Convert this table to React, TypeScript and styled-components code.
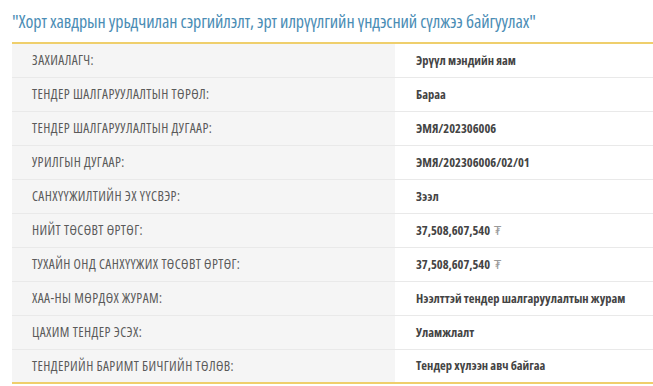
import React from "react";
import styled, { createGlobalStyle } from "styled-components";

const GlobalStyle = createGlobalStyle`
  html, body {
    margin: 0;
    padding: 0;
    background: #ffffff;
  }
  body {
    font-family: "Open Sans", "DejaVu Sans", sans-serif;
    font-stretch: 75%;
  }
`;

const rows = [
  { label: "ЗАХИАЛАГЧ:", value: "Эрүүл мэндийн яам" },
  { label: "ТЕНДЕР ШАЛГАРУУЛАЛТЫН ТӨРӨЛ:", value: "Бараа" },
  { label: "ТЕНДЕР ШАЛГАРУУЛАЛТЫН ДУГААР:", value: "ЭМЯ/202306006" },
  { label: "УРИЛГЫН ДУГААР:", value: "ЭМЯ/202306006/02/01" },
  { label: "САНХҮҮЖИЛТИЙН ЭХ ҮҮСВЭР:", value: "Зээл" },
  { label: "НИЙТ ТӨСӨВТ ӨРТӨГ:", value: "37,508,607,540", money: true },
  { label: "ТУХАЙН ОНД САНХҮҮЖИХ ТӨСӨВТ ӨРТӨГ:", value: "37,508,607,540", money: true },
  { label: "ХАА-НЫ МӨРДӨХ ЖУРАМ:", value: "Нээлттэй тендер шалгаруулалтын журам" },
  { label: "ЦАХИМ ТЕНДЕР ЭСЭХ:", value: "Уламжлалт" },
  { label: "ТЕНДЕРИЙН БАРИМТ БИЧГИЙН ТӨЛӨВ:", value: "Тендер хүлээн авч байгаа" },
];

export default function App() {
  return (
    <>
      <GlobalStyle />
      <Page>
        <Title>"Хорт хавдрын урьдчилан сэргийлэлт, эрт илрүүлгийн үндэсний сүлжээ байгуулах"</Title>
        <Table>
          <tbody>
            {rows.map((row) => (
              <Row key={row.label}>
                <Label>{row.label}</Label>
                <Value>
                  {row.value}
                  {row.money && <Currency>₮</Currency>}
                </Value>
              </Row>
            ))}
          </tbody>
        </Table>
      </Page>
    </>
  );
}

const Page = styled.div`
  padding: 10px 0 0 12px;
`;

const Title = styled.h2`
  margin: 0 0 9px;
  font-size: 18px;
  font-weight: 400;
  letter-spacing: -0.1px;
  line-height: 23px;
  color: #4b8db5;
  white-space: nowrap;
`;

const Table = styled.table`
  width: 100%;
  border-collapse: collapse;
  border-top: 2px solid #efcf6c;
  border-bottom: 2px solid #efcf6c;
`;

const Row = styled.tr`
  height: 34px;
  & + & td {
    border-top: 1px solid #e9e9e9;
  }
`;

const Label = styled.td`
  width: 363px;
  padding: 0 0 0 20px;
  background: #f5f5f5;
  color: #5a5a5a;
  font-size: 13.5px;
  font-weight: 400;
  letter-spacing: 0.4px;
`;

const Value = styled.td`
  padding: 0 0 0 21px;
  color: #444444;
  font-size: 12.5px;
  font-weight: 700;
`;

const Currency = styled.span`
  margin-left: 4px;
  color: #999999;
  font-weight: 400;
`;
